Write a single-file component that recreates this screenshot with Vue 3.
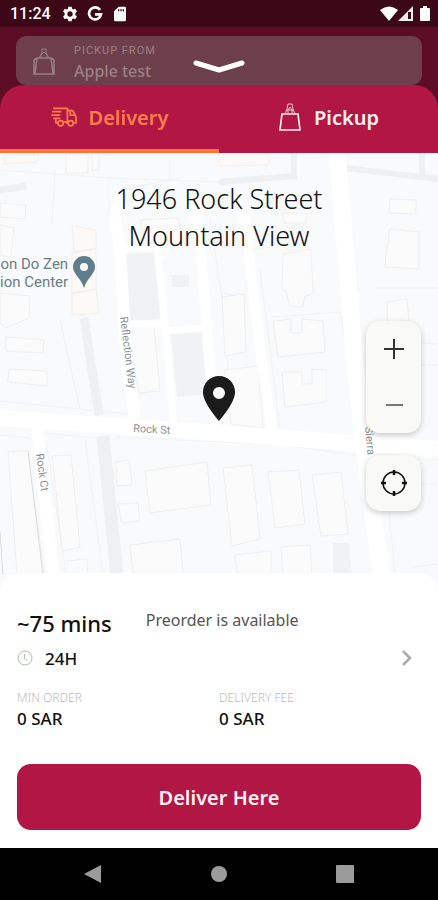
<template>
  <div class="order-page">
    <!-- status bar -->
    <header class="status-bar">
      <time class="clock">11:24</time>
      <svg class="status-icon" viewBox="0 0 24 24" fill="#fff">
        <path fill-rule="evenodd" d="M9.500 1h5l.6 3.200 1.800 1 3-1.100 2.500 4.300-2.400 2.100v3l2.400 2.100-2.500 4.300-3-1.100-1.800 1-.6 3.200h-5l-.6-3.200-1.800-1-3 1.100-2.500-4.300L4 13.500v-3L1.600 8.400l2.500-4.300 3 1.100 1.800-1zM12 8a4 4 0 1 0 0 8 4 4 0 0 0 0-8z" />
      </svg>
      <svg class="status-icon" viewBox="0 0 24 24" fill="none" stroke="#fff" stroke-width="4">
        <path d="M19.500 6A9 9 0 1 0 21 12.500h-9" />
      </svg>
      <svg class="status-icon card-icon" viewBox="0 0 24 24" fill="#fff">
        <path fill-rule="evenodd" d="M19 1h-9L3 8v13a2 2 0 0 0 2 2h14a2 2 0 0 0 2-2V3a2 2 0 0 0-2-2zM9 5h2v3H9zm3.500 0h2v3h-2zM16 5h2v3h-2z" />
      </svg>
      <div class="status-right">
        <svg width="18" height="16" viewBox="0 0 18 16" fill="#fff">
          <path d="M0 4Q9-3 18 4L9 15z" />
        </svg>
        <svg width="16" height="16" viewBox="0 0 16 16">
          <path d="M15 0v15H0z" fill="#eee" />
          <path d="M10 6h3v7h-3z" fill="#3c0717" />
        </svg>
        <svg class="battery" width="10" height="16" viewBox="0 0 10 16" fill="#fff">
          <path d="M3 0h4v2h2q1 0 1 1v11q0 1-1 1H1q-1 0-1-1V3q0-1 1-1h2z" />
        </svg>
      </div>
    </header>

    <!-- dimmed page behind the sheet -->
    <div class="backdrop">
      <div class="pickup-card">
        <svg class="bag-icon" viewBox="0 0 24 30" fill="none" stroke="currentColor" stroke-width="1.500">
          <path d="M5 12h14l3 2v14H2V14z M5 12L3 27M19 12l2 15" />
          <path d="M7 12l3-5V3h4v4l3 5M9 12V9l3-3 3 3v3" stroke-width="1" />
        </svg>
        <div class="pickup-text">
          <div class="pickup-label">PICKUP FROM</div>
          <div class="pickup-name">Apple test</div>
        </div>
        <button class="close-btn" aria-label="Close">
          <svg width="52" height="14" viewBox="0 0 52 14" fill="none" stroke="#fff" stroke-width="5" stroke-linecap="round" stroke-linejoin="round">
            <path d="M3 3l23 7 23-7" />
          </svg>
        </button>
      </div>
    </div>

    <!-- tabs -->
    <nav class="tabs">
      <button class="tab" :class="{ active: activeTab === 'delivery' }" @click="activeTab = 'delivery'">
        <svg class="truck-icon" viewBox="0 0 27 22" fill="none" stroke="currentColor" stroke-width="1.800" stroke-linecap="round" stroke-linejoin="round">
          <path d="M3 2h14v14h-4M17 4h4q2 0 3 3l2 4v6h-3M7 17H5v-3M18 17h-2M20 4v5h5M2 5.500h8M1 9h8M3 12.500h6" />
          <circle cx="10" cy="17.500" r="2.700" />
          <circle cx="20.500" cy="17.500" r="2.700" />
        </svg>
        Delivery
      </button>
      <button class="tab" :class="{ active: activeTab === 'pickup' }" @click="activeTab = 'pickup'">
        <svg class="bag-icon" viewBox="0 0 24 30" fill="none" stroke="currentColor" stroke-width="1.700">
          <path d="M4 12h16l2 16H2z" />
          <g stroke-width="1" opacity="0.8">
            <path d="M7 12l2-5 1-5h4l1 5 2 5M10 11V8l2-3 2 3v3M9 8h6" />
          </g>
        </svg>
        Pickup
      </button>
    </nav>

    <!-- map -->
    <main class="map">
      <svg class="map-canvas" viewBox="0 153 438 440" preserveAspectRatio="xMidYMin slice">
        <rect y="153" width="438" height="440" fill="#f9fafb" />
        <!-- parcels and paths -->
        <g fill="none" stroke="#f0f2f3">
          <path d="M0 170l110 8 110 4M55 170l-3 55M109 175v45M170 160v22M0 401l128 13M80 300l18 108M60 320l20 90M120 190l60-12M262 212l40-4M340 180l18 110M260 270l20 160M272 317l68-5 20 118M374 288h64M380 340l58 4M0 435l30 3M45 433l60 6M46 440l20 133M85 440l18 133M115 437l170 8M285 445l80 12M375 460h63M385 470l10 103M224 294h16M245 250l30-3M420 484h18M414 365h24M210 218l12 80 10 120" />
        </g>
        <g fill="none" stroke="#eef0f2">
          <path d="M84 318l15 97" stroke-width="9" />
          <path d="M103 436l16 160" stroke-width="13" />
          <path d="M219 182l75-6V150M346 168l92 11M422 153v22" stroke-width="6" />
          <path d="M0 190l26-4" stroke-width="7" />
        </g>
        <g fill="#f0f2f4">
          <path d="M124 254l32-2 4 67-32 3zM171 334l31-2 4 62-29 3zM172 275h17v12h-17zM333 543h16l3 32h-19z" />
        </g>
        <!-- buildings -->
        <g fill="#fbfbfb" stroke="#efefef">
          <path d="M66 153h22v20H66zM92 153h7v17h-7zM0 203l26 2-1 14-25-2zM0 225l14 3-3 29-11-2zM0 293l30 3-1 22-14 6-9 4-6-5zM6 337l38 3-1 13-37-2zM9 369l38 2v15l-39-4z" />
          <path d="M127 328l27-2 6 65-21 2zM8 452l20-1 16 122H17zM52 456l19-1 9 92-18 4-6-60zM67 561l20-2 1 14M116 462l13-2 3 25-15 1zM118 504l20-1 2 18-18 2zM145 471l62-9 4 43-61 8zM130 545l50-6 3 34h-50z" />
          <path d="M390 199l26 1v14l-27-1zM390 229l29 3v37l-34-2 1-13zM387 302l20-3 2 22-21 1zM283 254l28-5 2 45-8 2-2 11-13-1-4-15-4-1zM273 321l18-2v14h11v-14l21 2 2 31-47 5zM222 297l22-3 2 58-21 4z" />
          <path d="M223 468l29-3 8 74-28 7zM268 472l31-2 6 54-30 4zM312 475l29-3 7 62-27 2zM281 547l29-2 2 28h-29zM235 555l36-4v22h-34zM413 567l25-3M282 372h20v12h10v-15l14 1v32l-41 5zM224 370l34-4 5 62-32-4zM282 213h24v10h-22z" />
          <path d="M140 220l38-2 5 25-36 4z" />
        </g>
        <path d="M28 451l15 124M0 532l3 43" stroke="#dcdcdc" fill="none" />
        <path d="M72 226l24 4v18l-22 4zM72 293l24-4 3 24-27 2zM72 253l24-4v40l-24 5zM5 155h34l-2 7-32 2zM219 153h50v12l-50 1z" fill="#fcf9f6" stroke="#f5f0eb" />
        <!-- roads -->
        <g fill="none" stroke="#fff" stroke-linejoin="round">
          <path d="M135 418l-8-55-8-125q-10-30 6-37" stroke-width="12" />
          <path d="M120 250l37-2 8 75 9 106M126 324h40M166 331l40-3M158 261l10-15" stroke-width="7" />
          <path d="M188 202q12 15 14 65l13 160" stroke-width="10" />
          <path d="M244 214l18 150 10 66" stroke-width="10" />
          <path d="M337 150l18 215 9 80 20 150" stroke-width="17" />
          <path d="M37 425l4 40 15 132" stroke-width="12" />
          <path d="M0 418l219 15 146 11 73 5" stroke-width="16" />
        </g>
        <!-- street names -->
        <g class="street-names">
          <text x="133" y="432" transform="rotate(3 133 432)">Rock St</text>
          <text x="120" y="317" transform="rotate(83 120 317)">Reflection Way</text>
          <text x="36" y="454" transform="rotate(82 36 454)">Rock Ct</text>
          <text x="365" y="427" transform="rotate(85 365 427)">Sierra</text>
        </g>
      </svg>

      <h1 class="address">1946 Rock Street<br />Mountain View</h1>

      <div class="place">
        <span>on Do Zen<br />ion Center</span>
        <svg width="24" height="34" viewBox="0 0 24 34">
          <path fill="#607d8b" fill-rule="evenodd" d="M12 1a11 11 0 0 1 11 11c0 7-8 11-11 21C9 23 1 19 1 12A11 11 0 0 1 12 1zm0 7a4 4 0 1 0 0 8 4 4 0 0 0 0-8z" />
        </svg>
      </div>

      <svg class="marker" viewBox="0 0 32 46">
        <path fill="#1b1b1b" fill-rule="evenodd" d="M16 0a16 16 0 0 1 16 16.500C32 27 16 45 16 45S0 27 0 16.500A16 16 0 0 1 16 0zm0 11a6 6 0 1 0 0 12 6 6 0 0 0 0-12z" />
      </svg>

      <div class="map-controls">
        <div class="zoom-box">
          <button class="map-btn" aria-label="Zoom in">
            <svg width="20" height="20" viewBox="0 0 20 20" stroke="#333" stroke-width="2">
              <path d="M0 10h20M10 0v20" />
            </svg>
          </button>
          <button class="map-btn" aria-label="Zoom out">
            <svg width="20" height="20" viewBox="0 0 20 20" stroke="#777" stroke-width="2">
              <path d="M2 10h17" />
            </svg>
          </button>
        </div>
        <button class="map-btn locate-btn" aria-label="My location">
          <svg width="28" height="28" viewBox="0 0 28 28" fill="none" stroke="#111" stroke-width="2">
            <circle cx="14" cy="14" r="11" stroke-width="1.500" />
            <path d="M14 1v5M14 22v5M1 14h5M22 14h5" stroke-width="2.500" />
          </svg>
        </button>
      </div>
    </main>

    <!-- delivery details -->
    <section class="details">
      <div class="time-row">
        <strong class="duration">~75 mins</strong>
        <span class="preorder">Preorder is available</span>
      </div>
      <button class="hours-row">
        <svg width="16" height="16" viewBox="0 0 16 16" fill="none" stroke="#a9c3a7">
          <circle cx="8" cy="8" r="7" />
          <path d="M7.500 4v4.500l3 2" />
        </svg>
        <span>24H</span>
        <svg class="chevron" width="12" height="18" viewBox="0 0 12 18" fill="none" stroke="#aaa" stroke-width="2.500">
          <path d="M2 2l7 7-7 7" />
        </svg>
      </button>
      <dl class="fees">
        <div v-for="fee in fees" :key="fee.label" class="fee">
          <dt>{{ fee.label }}</dt>
          <dd>{{ fee.value }}</dd>
        </div>
      </dl>
      <button class="deliver-btn">Deliver Here</button>
    </section>

    <!-- system navigation -->
    <footer class="system-nav">
      <button aria-label="Back">
        <svg width="18" height="18" viewBox="0 0 18 18" fill="#9b9b9b"><path d="M17 0v18L0 9z" /></svg>
      </button>
      <button aria-label="Home">
        <svg width="18" height="18" viewBox="0 0 18 18" fill="#9b9b9b"><circle cx="9" cy="9" r="8" /></svg>
      </button>
      <button aria-label="Recent apps">
        <svg width="18" height="18" viewBox="0 0 18 18" fill="#9b9b9b"><rect width="18" height="18" rx="1" /></svg>
      </button>
    </footer>
  </div>
</template>

<script setup>
import { ref } from 'vue';

// current tab
const activeTab = ref('delivery');

const fees = [
  { label: 'MIN ORDER', value: '0 SAR' },
  { label: 'DELIVERY FEE', value: '0 SAR' },
];
</script>

<style>
body {
  margin: 0;
}
</style>

<style scoped>
.order-page {
  display: flex;
  flex-direction: column;
  min-height: 100vh;
  background-color: #fff;
  color: #111;
  font-family: 'Noto Sans', 'Open Sans', sans-serif;
}

button {
  padding: 0;
  border: none;
  background: none;
  color: inherit;
  font: inherit;
  cursor: pointer;
}

svg {
  display: block;
  flex-shrink: 0;
}

/* status bar */
.status-bar {
  display: flex;
  align-items: center;
  gap: 9px;
  height: 27px;
  padding: 0 8px 0 10px;
  background-color: #3c0717;
  color: #fff;
}

.clock {
  margin-right: 2px;
  font-family: Roboto, sans-serif;
  font-size: 16px;
  font-weight: 500;
}

.status-icon {
  width: 16px;
  height: 16px;
}

.status-right {
  display: flex;
  margin-left: auto;
}

.battery {
  margin-left: 6px;
}

/* card behind the sheet */
.backdrop {
  padding: 9px 16px 24px;
  background-color: #5d0c26;
}

.pickup-card {
  position: relative;
  display: flex;
  align-items: center;
  gap: 18px;
  height: 49px;
  padding-left: 16px;
  border-radius: 10px;
  background-color: #6d3f4c;
  color: #9b7f88;
}

.bag-icon {
  width: 24px;
  height: 30px;
}

.pickup-text {
  padding-top: 4px;
}

.pickup-label {
  font-family: Roboto, sans-serif;
  font-size: 11px;
  line-height: 16px;
  letter-spacing: 1px;
}

.pickup-name {
  font-size: 16px;
  font-weight: 500;
  line-height: 24px;
}

.close-btn {
  position: absolute;
  top: 24px;
  left: 50%;
  transform: translateX(-50%);
}

/* tabs */
.tabs {
  position: relative;
  display: flex;
  margin-top: -24px;
  border-radius: 24px 24px 0 0;
  background-color: #b21645;
  overflow: hidden;
}

.tab {
  display: flex;
  flex: 1;
  align-items: center;
  justify-content: center;
  gap: 12px;
  height: 68px;
  border-bottom: 4px solid transparent;
  box-sizing: border-box;
  color: #fff0ec;
  font-size: 20px;
  font-weight: 600;
}

.tab.active {
  border-bottom-color: #ff7535;
  color: #ff7d49;
}

.truck-icon {
  width: 26px;
  height: 22px;
}

/* map */
.map {
  position: relative;
  flex: 1;
  min-height: 420px;
  background-color: #f9fafb;
}

.map-canvas {
  position: absolute;
  top: 0;
  left: 0;
  width: 100%;
  height: calc(100% + 20px);
}

.street-names {
  fill: #8d9194;
  font-family: Roboto, sans-serif;
  font-size: 11px;
}

.address {
  position: relative;
  margin: 0;
  padding-top: 27px;
  font-size: 27px;
  font-weight: 300;
  line-height: 37px;
  text-align: center;
}

.place {
  position: absolute;
  top: 102px;
  left: 0;
  display: flex;
  gap: 4px;
  color: #6c7d87;
  font-family: Roboto, sans-serif;
  font-size: 15px;
  line-height: 18px;
  text-align: right;
}

.marker {
  position: absolute;
  top: 223px;
  left: 50%;
  width: 32px;
  height: 46px;
  transform: translateX(-50%);
}

.map-controls {
  position: absolute;
  top: 168px;
  right: 17px;
  display: flex;
  flex-direction: column;
  gap: 22px;
}

.zoom-box,
.locate-btn {
  border-radius: 14px;
  background-color: #f9f9f8;
  box-shadow: 0 2px 6px rgba(0, 0, 0, 0.2);
}

.map-btn {
  display: flex;
  align-items: center;
  justify-content: center;
  width: 55px;
  height: 56px;
}

/* details */
.details {
  position: relative;
  padding: 34px 17px 18px;
  border-radius: 20px 20px 0 0;
  background-color: #fff;
}

.time-row {
  display: flex;
  gap: 34px;
}

.duration {
  font-size: 22px;
  font-weight: 500;
  line-height: 32px;
}

.preorder {
  color: #555;
  font-size: 16px;
  line-height: 26px;
}

.hours-row {
  display: flex;
  align-items: center;
  gap: 12px;
  width: 100%;
  height: 38px;
  padding-right: 8px;
  font-size: 17px;
  font-weight: 500;
}

.chevron {
  margin-left: auto;
}

.fees {
  display: flex;
  margin: 12px 0 33px;
}

.fee {
  flex: 1;
}

.fee dt {
  color: #bbb;
  font-size: 12px;
  font-weight: 300;
  line-height: 18px;
}

.fee dd {
  margin: 0;
  font-size: 17px;
  font-weight: 500;
  line-height: 24px;
}

.deliver-btn {
  width: 100%;
  height: 66px;
  border-radius: 14px;
  background-color: #b21645;
  color: #fff0f0;
  font-size: 20px;
  font-weight: 600;
}

/* system navigation */
.system-nav {
  display: flex;
  align-items: center;
  justify-content: center;
  gap: 108px;
  height: 52px;
  background-color: #000;
}
</style>
